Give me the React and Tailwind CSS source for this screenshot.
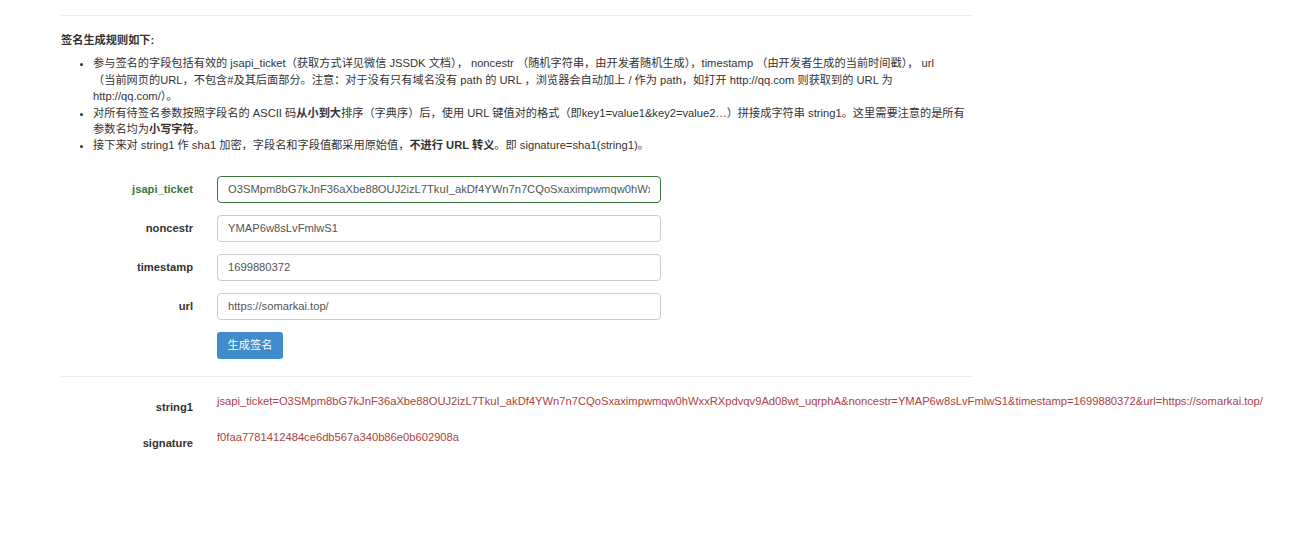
import React, { useState } from 'react';

const FONT = { fontFamily: '"Liberation Sans", Arial, "Noto Sans CJK SC", sans-serif' };

const TICKET = 'O3SMpm8bG7kJnF36aXbe88OUJ2izL7TkuI_akDf4YWn7n7CQoSxaximpwmqw0hWxxRXpdvqv9Ad08wt_uqrphA';

function Field({ label, value, onChange, success }) {
  return (
    <div className="flex items-center">
      <label
        className={`w-[132px] shrink-0 text-right font-bold ${success ? 'text-[#3c763d]' : 'text-[#333]'}`}
      >
        {label}
      </label>
      <input
        value={value}
        onChange={(e) => onChange(e.target.value)}
        className={`ml-[24px] h-[27px] w-[444px] rounded-[4px] border bg-white px-[10px] text-[11.2px] text-[#555] outline-none ${
          success ? 'border-[#3c763d]' : 'border-[#ccc]'
        }`}
      />
    </div>
  );
}

export default function App() {
  const [ticket, setTicket] = useState(TICKET);
  const [noncestr, setNoncestr] = useState('YMAP6w8sLvFmlwS1');
  const [timestamp, setTimestamp] = useState('1699880372');
  const [url, setUrl] = useState('https://somarkai.top/');

  const string1 = `jsapi_ticket=${ticket}&noncestr=${noncestr}&timestamp=${timestamp}&url=${url}`;

  return (
    <div className="min-h-[538px] bg-white text-[11.2px] leading-[16.4px] text-[#333]" style={FONT}>
      <div className="ml-[61px] w-[912px]">
        <div className="pt-[15px]">
          <div className="border-t border-[#eee]" />
        </div>

        <p className="mt-[16px] font-bold">签名生成规则如下:</p>

        <ul className="mt-[7px] list-disc whitespace-nowrap pl-[32px]">
          <li>
            参与签名的字段包括有效的 jsapi_ticket（获取方式详见微信 JSSDK 文档）， noncestr （随机字符串，由开发者随机生成），timestamp （由开发者生成的当前时间戳）， url
            <br />
            （当前网页的URL，不包含#及其后面部分。注意：对于没有只有域名没有 path 的 URL ，浏览器会自动加上 / 作为 path，如打开 http://qq.com 则获取到的 URL 为
            <br />
            http://qq.com/）。
          </li>
          <li>
            对所有待签名参数按照字段名的 ASCII 码<b>从小到大</b>排序（字典序）后，使用 URL 键值对的格式（即key1=value1&amp;key2=value2…）拼接成字符串 string1。这里需要注意的是所有
            <br />
            参数名均为<b>小写字符</b>。
          </li>
          <li>
            接下来对 string1 作 sha1 加密，字段名和字段值都采用原始值，<b>不进行 URL 转义</b>。即 signature=sha1(string1)。
          </li>
        </ul>

        <div className="mt-[22px] flex flex-col gap-[12px]">
          <Field label="jsapi_ticket" value={ticket} onChange={setTicket} success />
          <Field label="noncestr" value={noncestr} onChange={setNoncestr} />
          <Field label="timestamp" value={timestamp} onChange={setTimestamp} />
          <Field label="url" value={url} onChange={setUrl} />
          <div className="flex">
            <button className="ml-[156px] h-[27px] w-[66px] rounded-[3px] bg-[#428bca] text-[11.2px] text-white">
              生成签名
            </button>
          </div>
        </div>

        <div className="mt-[17px] border-t border-[#eee]" />

        <div className="mt-[16px] flex flex-col gap-[14px]">
          <div className="flex">
            <div className="w-[132px] shrink-0 pt-[6px] text-right font-bold">string1</div>
            <div className="ml-[24px] whitespace-nowrap text-[#a94442]">{string1}</div>
          </div>
          <div className="flex">
            <div className="w-[132px] shrink-0 pt-[6px] text-right font-bold">signature</div>
            <div className="ml-[24px] whitespace-nowrap text-[#a94442]">f0faa7781412484ce6db567a340b86e0b602908a</div>
          </div>
        </div>
      </div>
    </div>
  );
}
